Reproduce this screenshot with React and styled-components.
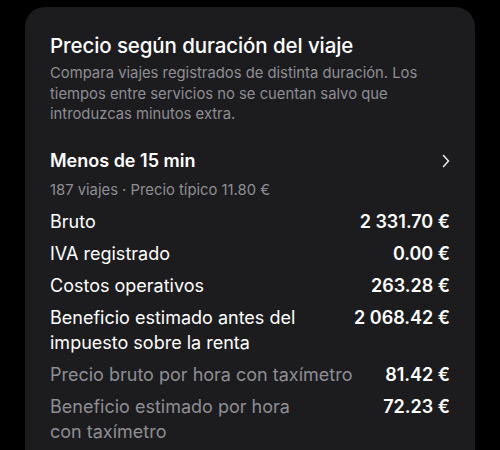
import styled, { createGlobalStyle } from "styled-components";

const GlobalStyle = createGlobalStyle`
    html, body {
        margin: 0;
        padding: 0;
        background: #000000;
    }
    body {
        font-family: Inter, "Noto Sans", sans-serif;
        -webkit-font-smoothing: antialiased;
    }
`;

const Page = styled.div`
    width: 500px;
    height: 450px;
    overflow: hidden;
    padding: 7px 25px 0;
    box-sizing: border-box;
`;

const Card = styled.section`
    background: #1c1c1e;
    border-radius: 20px;
    padding: 26px 25px 20px;
    min-height: 480px;
    box-sizing: border-box;
`;

const Title = styled.h2`
    margin: 0;
    font-size: 20.5px;
    font-weight: 500;
    color: #ffffff;
    letter-spacing: -0.1px;
    line-height: 26px;
`;

const Subtitle = styled.p`
    margin: 4px 0 0;
    font-size: 14.8px;
    line-height: 20.5px;
    color: #8e8e93;
`;

const GroupHeader = styled.div`
    display: flex;
    align-items: center;
    justify-content: space-between;
    margin-top: 24px;
    height: 24px;
`;

const GroupTitle = styled.span`
    font-size: 18px;
    font-weight: 600;
    color: #ffffff;
`;

const Chevron = styled.svg`
    width: 8px;
    height: 14px;
`;

const Meta = styled.div`
    margin-top: 7px;
    font-size: 14.8px;
    line-height: 20px;
    color: #8e8e93;
`;

const Rows = styled.div`
    display: flex;
    flex-direction: column;
    gap: 7px;
    margin-top: 9px;
`;

const Row = styled.div`
    display: flex;
    justify-content: space-between;
    align-items: flex-start;
    gap: 16px;
`;

const Label = styled.span`
    font-size: 18px;
    line-height: 25px;
    color: ${(p) => (p.$muted ? "#8e8e93" : "#ffffff")};
    max-width: ${(p) => p.$wrap || "none"};
`;

const Value = styled.span`
    font-size: 18px;
    line-height: 25px;
    font-weight: 600;
    color: #ffffff;
    white-space: nowrap;
`;

const rows = [
    { label: "Bruto", value: "2 331.70 €" },
    { label: "IVA registrado", value: "0.00 €" },
    { label: "Costos operativos", value: "263.28 €" },
    { label: "Beneficio estimado antes del impuesto sobre la renta", value: "2 068.42 €", wrap: "260px" },
    { label: "Precio bruto por hora con taxímetro", value: "81.42 €", muted: true },
    { label: "Beneficio estimado por hora con taxímetro", value: "72.23 €", muted: true, wrap: "260px" },
];

export default function App() {
    return (
        <Page>
            <GlobalStyle />
            <Card>
                <Title>Precio según duración del viaje</Title>
                <Subtitle>
                    Compara viajes registrados de distinta duración. Los tiempos entre servicios no se cuentan salvo que
                    introduzcas minutos extra.
                </Subtitle>
                <GroupHeader>
                    <GroupTitle>Menos de 15 min</GroupTitle>
                    <Chevron viewBox="0 0 8 14" fill="none">
                        <path d="M1.5 1.5 L6.5 7 L1.5 12.5" stroke="#e5e5ea" strokeWidth="1.6" strokeLinecap="round" strokeLinejoin="round" />
                    </Chevron>
                </GroupHeader>
                <Meta>187 viajes · Precio típico 11.80 €</Meta>
                <Rows>
                    {rows.map((r) => (
                        <Row key={r.label}>
                            <Label $muted={r.muted} $wrap={r.wrap}>
                                {r.label}
                            </Label>
                            <Value>{r.value}</Value>
                        </Row>
                    ))}
                </Rows>
            </Card>
        </Page>
    );
}
